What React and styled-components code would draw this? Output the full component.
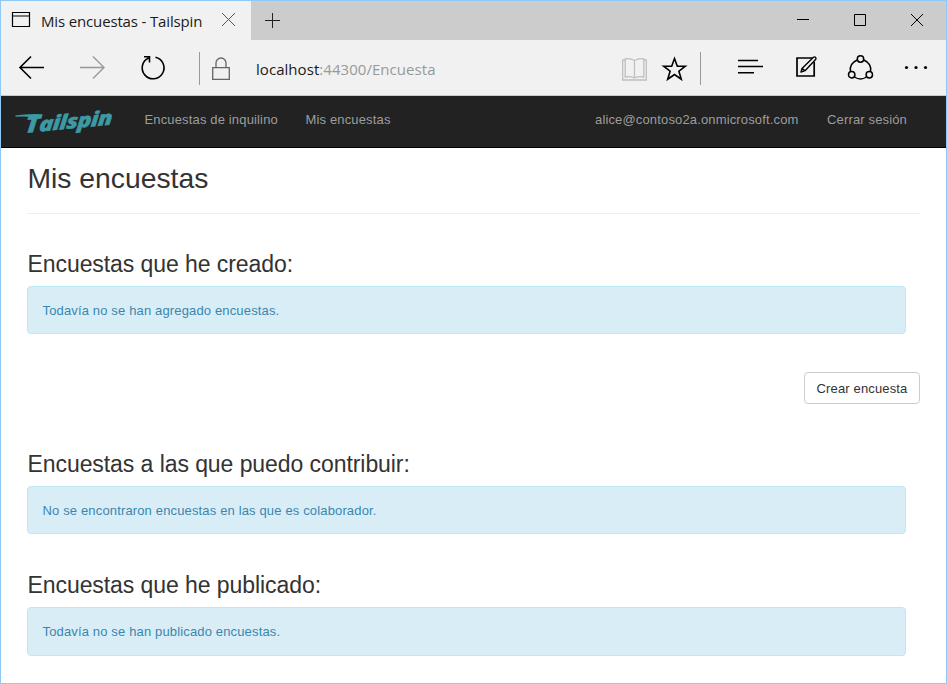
import React from "react";
import styled, { createGlobalStyle } from "styled-components";

const Global = createGlobalStyle`
  * { box-sizing: border-box; }
  html, body { margin: 0; padding: 0; overflow: hidden; }
`;

const Window = styled.div`
  width: 947px;
  height: 684px;
  border: 1px solid #90c8f6;
  background: #fff;
  display: flex;
  flex-direction: column;
  overflow: hidden;
  font-family: "Liberation Sans", Arial, sans-serif;
  color: #333;
`;

const TabBar = styled.div`
  height: 39px;
  flex: none;
  display: flex;
  background: #ccc;
`;

const Tab = styled.div`
  width: 250px;
  display: flex;
  background: #f1f1f1;
`;

const ChromeText = styled.span`
  font-family: "Open Sans", "Noto Sans", sans-serif;
  font-size: ${(p) => p.$size}px;
  letter-spacing: ${(p) => p.$track || 0}px;
  line-height: 20px;
  white-space: nowrap;
  color: #1a1a1a;
`;

const TabTitle = styled(ChromeText)`
  width: 167px;
  margin: 10px 12px 0 10px;
`;

const Muted = styled.span`
  color: #999;
`;

const Icon = styled.svg`
  display: block;
  flex: none;
  overflow: visible;
  margin-left: ${(p) => p.$left || 0}px;
  margin-top: ${(p) => p.$top || 0}px;
  fill: none;
  stroke: ${(p) => p.$color || "#000"};
  stroke-width: ${(p) => p.$weight || 1};
`;

const Toolbar = styled.div`
  height: 56px;
  flex: none;
  display: flex;
  background: #f1f1f1;
  border-bottom: 1px solid #c6cbc8;
`;

const Divider = styled.div`
  width: 1px;
  height: 33px;
  background: #999;
  margin: 12px 0 0 ${(p) => p.$left}px;
`;

const Address = styled(ChromeText)`
  width: 366px;
  margin: 19px 0 0 26px;
`;

const Nav = styled.nav`
  height: 52px;
  flex: none;
  display: flex;
  background: #222;
  border-bottom: 1px solid #000;
`;

const NavLink = styled.a`
  font-size: 13px;
  line-height: 18px;
  letter-spacing: 0.15px;
  margin: 15px 0 0 ${(p) => p.$left}px;
  width: ${(p) => p.$width}px;
  white-space: nowrap;
  color: #9d9d9d;
`;

const Main = styled.main`
  flex: 1;
  padding: 0 26px;
  display: flex;
  flex-direction: column;
`;

const PageHeader = styled.header`
  height: 66px;
  border-bottom: 1px solid #eee;
`;

const Title = styled.h1`
  margin: 14px 0 0;
  padding-left: 0.5px;
  font-size: 28.3px;
  line-height: 32px;
  font-weight: 400;
`;

const Section = styled.section`
  margin-top: ${(p) => p.$top}px;
`;

const Heading = styled.h2`
  margin: 0;
  padding-left: 0.5px;
  height: 36px;
  font-size: 23px;
  line-height: 28px;
  letter-spacing: -0.07px;
  font-weight: 400;
`;

const Alert = styled.div`
  height: ${(p) => p.$height || 48}px;
  margin-right: 14px;
  padding: 15px 14.5px;
  border: 1px solid #bce8f1;
  border-radius: 4px;
  background: #d9edf7;
  color: #3a87ad;
  font-size: 13px;
  line-height: 18px;
  letter-spacing: 0.15px;
`;

const CreateButton = styled.button`
  align-self: flex-end;
  width: 116px;
  height: 32px;
  margin-top: 38px;
  padding: 1px 0 0;
  border: 1px solid #ccc;
  border-radius: 4px;
  background: #fff;
  color: #333;
  font: 13px/18px "Liberation Sans", Arial, sans-serif;
  letter-spacing: 0.15px;
  white-space: nowrap;
`;

const LogoText = styled.text`
  font: italic 800 20px "Open Sans", sans-serif;
  fill: #3d99a3;
  stroke: #3d99a3;
  stroke-width: 0.4px;
`;

function Logo() {
  return (
    <Icon width="100" height="28" $left={14} $top={11}>
      <path d="M0 8.6 Q13 6.4 27 7.2 L26 11 Q12 8.8 1 9.8Z" fill="#3d99a3" stroke="none" />
      <LogoText
        transform="translate(9.5 26) rotate(-5.5) skewX(-10) scale(1.18 1)"
        textLength="74.5"
        lengthAdjust="spacing"
      >
        <tspan fontSize="23">T</tspan>ailspin
      </LogoText>
    </Icon>
  );
}

export default function App() {
  return (
    <>
      <Global />
      <Window>
        <TabBar>
          <Tab>
            <Icon width="19" height="16" $left={11} $top={11} $weight={1.2}>
              <path d="M.5.5h17v14H.5zM.5 4h17" />
            </Icon>
            <TabTitle $size={15} $track={-0.15}>Mis encuestas - Tailspin</TabTitle>
            <Icon width="13" height="13" $top={12} $left={2} $color="#555">
              <path d="M0 0l13 13M13 0L0 13" />
            </Icon>
          </Tab>
          <Icon width="15" height="15" $left={14} $top={12} $color="#222">
            <path d="M7.5 0v15M0 7.5h15" />
          </Icon>
          <Icon width="12" height="12" $left={517} $top={13}>
            <path d="M0 5.5h12" />
          </Icon>
          <Icon width="12" height="12" $left={45} $top={13}>
            <path d="M.5.5h11v11H.5z" />
          </Icon>
          <Icon width="12" height="12" $left={45} $top={13}>
            <path d="M0 0l12 12M12 0L0 12" />
          </Icon>
        </TabBar>
        <Toolbar>
          <Icon width="25" height="24" $left={18} $top={16} $weight={1.6}>
            <path d="M25 11.5H1M12 .5L1 11.5l11 11" />
          </Icon>
          <Icon width="25" height="24" $left={36} $top={16} $color="#999" $weight={1.4}>
            <path d="M0 11.5h24M13 .5l11 11-11 11" />
          </Icon>
          <Icon width="24" height="24" $left={36} $top={16} $weight={1.6}>
            <path d="M7.6 1.9A10.9 10.9 0 1 0 14.5 1.2M3 .8h5.5v5.6" />
          </Icon>
          <Divider $left={34} />
          <Icon width="18" height="24" $left={12} $top={17} $color="#666" $weight={1.3}>
            <path d="M.7 10.7h16.6v11.6H.7zM4 10.5V6a5 5 0 0 1 10 0v4.5" />
          </Icon>
          <Address $size={15} $track={0.05}>
            localhost<Muted>:44300/Encuesta</Muted>
          </Address>
          <Icon width="25" height="23" $top={18} $color="#bfbfbf" $weight={1.3}>
            <path d="M3 2H.7v20h23.6V2H22M12.5 2.5v17M12.5 2.5Q8 0 3.2 1v18q5-1 9.3 1 4.3-2 9.3-1V1Q17 0 12.5 2.5" />
          </Icon>
          <Icon width="24" height="24" $left={15} $top={17} $weight={1.6}>
            <path d="M12.5 1.5l2.8 7.7h8l-6.4 5 2.4 8-6.8-4.7-6.8 4.7 2.4-8-6.4-5h8z" />
          </Icon>
          <Divider $left={14} />
          <Icon width="26" height="16" $left={37} $top={18} $weight={1.6}>
            <path d="M0 2.5h20M0 8.5h25M0 14.8h16" />
          </Icon>
          <Icon width="22" height="22" $left={32} $top={16} $weight={1.7}>
            <path d="M16.5 2H1v18h17.2V6" />
            <path d="M5 16l1-3.6L17.2 1.4q1.6-1 2.4 0t0 2.2L9 14.7zM6 12.4l3 2.3" strokeWidth="1.4" strokeLinejoin="round" />
          </Icon>
          <Icon width="26" height="26" $left={29} $top={14} $weight={1.5}>
            <g transform="translate(.5 .5)">
              <circle cx="13" cy="4.5" r="3.2" />
              <circle cx="4.2" cy="20.3" r="3.2" />
              <circle cx="21.8" cy="20.3" r="3.2" />
              <path d="M9.7 5.5Q1.5 9 3 17.2M16.3 5.5Q24.5 9 23 17.2M7 22.5q6 4 12 0" />
            </g>
          </Icon>
          <Icon width="24" height="4" $left={31} $top={25}>
            <g fill="#000" stroke="none">
              <circle cx="2.5" cy="2.5" r="1.6" />
              <circle cx="12" cy="2.5" r="1.6" />
              <circle cx="21.5" cy="2.5" r="1.6" />
            </g>
          </Icon>
        </Toolbar>
        <Nav>
          <Logo />
          <NavLink $left={29.5} $width={161}>Encuestas de inquilino</NavLink>
          <NavLink $left={0} $width={289.5}>Mis encuestas</NavLink>
          <NavLink $left={0} $width={232}>alice@contoso2a.onmicrosoft.com</NavLink>
          <NavLink $left={0} $width={82}>Cerrar sesión</NavLink>
        </Nav>
        <Main>
          <PageHeader>
            <Title>Mis encuestas</Title>
          </PageHeader>
          <Section $top={36}>
            <Heading>Encuestas que he creado:</Heading>
            <Alert>Todavía no se han agregado encuestas.</Alert>
          </Section>
          <CreateButton>Crear encuesta</CreateButton>
          <Section $top={46}>
            <Heading>Encuestas a las que puedo contribuir:</Heading>
            <Alert>No se encontraron encuestas en las que es colaborador.</Alert>
          </Section>
          <Section $top={37}>
            <Heading>Encuestas que he publicado:</Heading>
            <Alert $height={49}>Todavía no se han publicado encuestas.</Alert>
          </Section>
        </Main>
      </Window>
    </>
  );
}
